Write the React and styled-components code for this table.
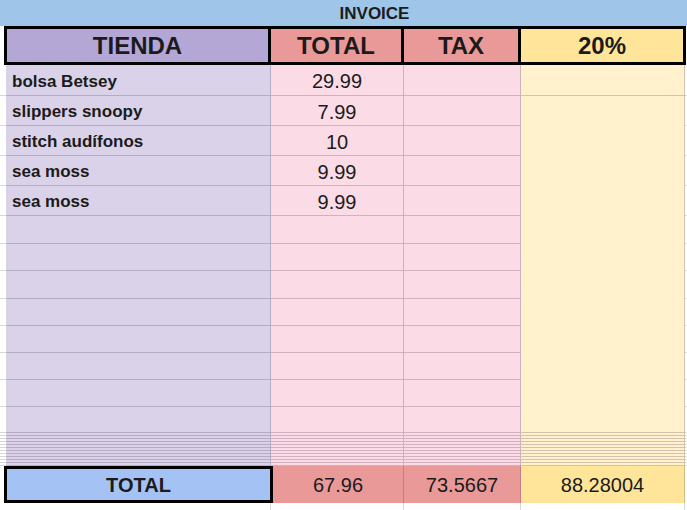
import React from "react";
import styled, { createGlobalStyle } from "styled-components";

const Global = createGlobalStyle`
  html, body { margin: 0; padding: 0; background: #fff; }
  body { font-family: "Liberation Sans", Arial, sans-serif; color: #1b1b1b; }
`;

const COLS = "6px 265px 133px 117px 164px 1fr";
const LINE = "rgba(70, 45, 80, 0.24)";

const Sheet = styled.div`
  width: 687px;
  height: 510px;
  overflow: hidden;
  display: flex;
  flex-direction: column;
`;

const Banner = styled.div`
  height: 26px;
  background: #9fc5e8;
  display: flex;
  align-items: center;
  justify-content: center;
  padding: 1px 0 0 62px;
  font-size: 17px;
  font-weight: 700;
  box-sizing: border-box;
`;

const HeaderRow = styled.div`
  margin-left: 4px;
  width: 682px;
  height: 39px;
  box-sizing: border-box;
  background: #000;
  padding: 3px;
  display: grid;
  grid-template-columns: 261px 130px 114px 1fr;
  gap: 3px;
`;

const HeadCell = styled.div`
  background: ${(p) => p.$bg};
  display: flex;
  align-items: center;
  justify-content: center;
  padding-top: 1px;
  font-size: 24px;
  font-weight: 700;
`;

const Body = styled.div`
  display: grid;
  grid-template-columns: ${COLS};
  grid-template-rows: ${(p) => p.$rows};
`;

const Cell = styled.div`
  box-sizing: border-box;
  min-height: 0;
  background: ${(p) => p.$bg || "#fff"};
  border-bottom: 1px solid ${(p) => (p.$edge ? "#d6d6d6" : LINE)};
  border-right: 1px solid ${(p) => (p.$edge ? "transparent" : LINE)};
  display: flex;
  align-items: center;
  justify-content: ${(p) => (p.$left ? "flex-start" : "center")};
  padding: ${(p) => (p.$thin ? "0" : "3px")} 0 0 ${(p) => (p.$left ? "6px" : "0")};
  font-size: ${(p) => (p.$left ? "17px" : "20px")};
  font-weight: ${(p) => (p.$left ? 700 : 400)};
  overflow: hidden;
  white-space: nowrap;
`;

const Merged = styled(Cell)`
  grid-row: span ${(p) => p.$span};
`;

const Footer = styled.div`
  display: grid;
  grid-template-columns: 4px 269px 131px 117px 164px 1fr;
  height: 37px;
`;

const FootLabel = styled.div`
  box-sizing: border-box;
  border: 3px solid #000;
  background: #a4c2f4;
  display: flex;
  align-items: center;
  justify-content: center;
  padding-top: 1px;
  font-size: 20px;
  font-weight: 700;
`;

const FootValue = styled.div`
  box-sizing: border-box;
  background: ${(p) => p.$bg || "#fff"};
  border-right: 1px solid ${(p) => (p.$bg ? LINE : "transparent")};
  display: flex;
  align-items: center;
  justify-content: center;
  padding-top: 2px;
  font-size: 20px;
`;

const Tail = styled.div`
  flex: 1;
  display: grid;
  grid-template-columns: ${COLS};
`;

const TailCell = styled.div`
  border-right: 1px solid ${(p) => (p.$line ? "#d9d9d9" : "transparent")};
`;

const LAV = "#d9d2e9";
const PINK = "#fadbe6";
const CREAM = "#fff2cc";

const items = [
  ["bolsa Betsey", "29.99"],
  ["slippers snoopy", "7.99"],
  ["stitch audífonos", "10"],
  ["sea moss", "9.99"],
  ["sea moss", "9.99"],
];
const emptyHeights = [28, 27, 28, 27, 27, 27, 27, 26];
const squished = 11;

export default function App() {
  const heights = [31, 30, 30, 30, 30, ...emptyHeights, ...Array(squished).fill(3)];
  const rows = [
    ...items.map(([n, t]) => ({ name: n, total: t })),
    ...emptyHeights.map(() => ({})),
    ...Array.from({ length: squished }, () => ({ thin: true })),
  ];
  const merged = items.length - 1 + emptyHeights.length;

  return (
    <Sheet>
      <Global />
      <Banner>INVOICE</Banner>
      <HeaderRow>
        <HeadCell $bg="#b4a7d6">TIENDA</HeadCell>
        <HeadCell $bg="#ea9999">TOTAL</HeadCell>
        <HeadCell $bg="#ea9999">TAX</HeadCell>
        <HeadCell $bg="#ffe599">20%</HeadCell>
      </HeaderRow>
      <Body $rows={heights.map((h) => h + "px").join(" ")}>
        {rows.map((r, i) => (
          <React.Fragment key={i}>
            <Cell $edge $thin={r.thin} />
            <Cell $bg={LAV} $left $thin={r.thin}>{r.name}</Cell>
            <Cell $bg={PINK} $thin={r.thin}>{r.total}</Cell>
            <Cell $bg={PINK} $thin={r.thin} />
            {i === 0 && <Cell $bg={CREAM} />}
            {i === 1 && <Merged $bg={CREAM} $span={merged} />}
            {i > merged && <Cell $bg={CREAM} $thin={r.thin} />}
            <Cell $edge $thin={r.thin} />
          </React.Fragment>
        ))}
      </Body>
      <Footer>
        <FootValue />
        <FootLabel>TOTAL</FootLabel>
        <FootValue $bg="#ea9999">67.96</FootValue>
        <FootValue $bg="#ea9999">73.5667</FootValue>
        <FootValue $bg="#ffe599">88.28004</FootValue>
        <FootValue />
      </Footer>
      <Tail>
        <TailCell />
        <TailCell $line />
        <TailCell $line />
        <TailCell $line />
        <TailCell $line />
        <TailCell />
      </Tail>
    </Sheet>
  );
}
